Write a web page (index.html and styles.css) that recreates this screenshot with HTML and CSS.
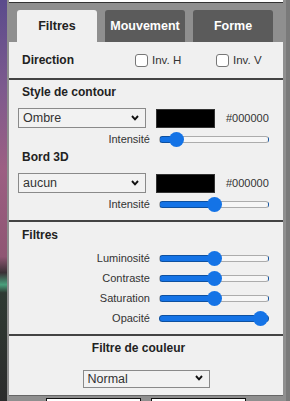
FILE: index.html
```html
<!DOCTYPE html>
<html lang="fr">
<head>
    <meta charset="UTF-8">
    <meta name="viewport" content="width=device-width, initial-scale=1.0">
    <title>Filtres</title>
    <link rel="stylesheet" href="styles.css">
</head>
<body>
    <div class="backdrop"></div>

    <div class="panel">
        <div class="top-strip"></div>

        <nav class="tabs">
            <button class="tab active">Filtres</button>
            <button class="tab">Mouvement</button>
            <button class="tab">Forme</button>
        </nav>

        <!-- Direction -->
        <section class="section direction">
            <h3>Direction</h3>
            <label class="check"><input type="checkbox"> Inv. H</label>
            <label class="check"><input type="checkbox"> Inv. V</label>
        </section>

        <!-- Contour + bord 3D -->
        <section class="section outline">
            <h3>Style de contour</h3>
            <div class="pick-row">
                <div class="select-wrap">
                    <select><option>Ombre</option></select>
                    <svg class="chevron" viewBox="0 0 8 6"><polyline points="1,1 4,4.3 7,1"/></svg>
                </div>
                <div class="swatch"></div>
                <span class="hex">#000000</span>
            </div>
            <div class="slider-row">
                <label>Intensité</label>
                <input type="range" value="10" style="--fill: 15.5%">
            </div>

            <h3 class="sub">Bord 3D</h3>
            <div class="pick-row">
                <div class="select-wrap">
                    <select><option>aucun</option></select>
                    <svg class="chevron" viewBox="0 0 8 6"><polyline points="1,1 4,4.3 7,1"/></svg>
                </div>
                <div class="swatch"></div>
                <span class="hex">#000000</span>
            </div>
            <div class="slider-row">
                <label>Intensité</label>
                <input type="range" value="50" style="--fill: 50%">
            </div>
        </section>

        <!-- Filtres -->
        <section class="section filters">
            <h3>Filtres</h3>
            <div class="slider-list">
                <div class="slider-row">
                    <label>Luminosité</label>
                    <input type="range" value="50" style="--fill: 50%">
                </div>
                <div class="slider-row">
                    <label>Contraste</label>
                    <input type="range" value="50" style="--fill: 50%">
                </div>
                <div class="slider-row">
                    <label>Saturation</label>
                    <input type="range" value="50" style="--fill: 50%">
                </div>
                <div class="slider-row">
                    <label>Opacité</label>
                    <input type="range" value="100" style="--fill: 100%">
                </div>
            </div>
        </section>

        <!-- Filtre de couleur -->
        <section class="section color-filter">
            <h3>Filtre de couleur</h3>
            <div class="select-wrap small">
                <select><option>Normal</option></select>
                <svg class="chevron" viewBox="0 0 8 6"><polyline points="1,1 4,4.3 7,1"/></svg>
            </div>
        </section>

        <div class="footer">
            <button class="foot-btn"></button>
            <button class="foot-btn"></button>
        </div>
    </div>
</body>
</html>
```

FILE: styles.css
```css
/* Panneau d'effets */
body {
    font-family: 'Liberation Sans', Arial, sans-serif;
    margin: 0;
    padding: 0;
    height: 401px;
    overflow: hidden;
    display: flex;
    color: #222;
}

.backdrop {
    width: 7px;
    flex-shrink: 0;
    background: linear-gradient(to bottom,
        #5a4b8c 0%, #7d5a8e 22%, #9c5f83 42%, #8f5673 64%,
        #3a3036 68%, #4aa07c 71%, #2f3a33 73%, #2c2c2c 100%);
}

.panel {
    flex: 1;
    min-width: 0;
    background-color: #8f8f8f;
    padding: 0 3px 0 2px;
    border-right: 4px solid #7a7a7a;
}

.top-strip {
    height: 2px;
    background-color: #fff;
    border-bottom: 1px solid #333;
}

.tabs {
    display: flex;
    gap: 8px;
    padding-left: 8px;
    margin-top: 7px;
}

.tab {
    width: 80px;
    height: 32px;
    border: none;
    border-radius: 3px 3px 0 0;
    background-color: #5b5b5b;
    color: #fff;
    font-family: inherit;
    font-size: 12.5px;
    font-weight: 700;
    padding: 0;
}

.tab.active {
    background-color: #f0f0f0;
    color: #222;
}

.section {
    background-color: #f0f0f0;
    border-top: 2px solid #444;
}

.section h3 {
    margin: 0;
    font-size: 12px;
    line-height: 14px;
    font-weight: 700;
}

/* Direction */
.direction {
    border-top: none;
    height: 36px;
    display: flex;
    align-items: center;
    padding: 0 13px;
}

.direction h3 {
    width: 113px;
}

.check {
    width: 81px;
    display: flex;
    align-items: center;
    gap: 4px;
    font-size: 11.5px;
    color: #333;
}

.check:last-child {
    width: auto;
}

.check input {
    -webkit-appearance: none;
    appearance: none;
    width: 13px;
    height: 13px;
    margin: 0;
    border: 1px solid #777;
    border-radius: 3px;
    background-color: #fff;
}

/* Contour */
.outline {
    padding: 5px 9px 8px;
}

.outline h3,
.filters h3 {
    padding-left: 4px;
}

.outline .sub {
    margin-top: 3px;
}

.pick-row {
    display: flex;
    align-items: center;
    margin-top: 9px;
}

.select-wrap {
    position: relative;
    width: 128px;
    height: 20px;
    flex-shrink: 0;
}

.select-wrap select {
    -webkit-appearance: none;
    appearance: none;
    width: 100%;
    height: 100%;
    margin: 0;
    padding: 0 0 0 4px;
    border: 1px solid #8a8a8a;
    border-radius: 0;
    background-color: #f2f2f2;
    font-family: inherit;
    font-size: 12.5px;
    color: #333;
}

.chevron {
    position: absolute;
    right: 7px;
    top: 7px;
    width: 8px;
    height: 6px;
    fill: none;
    stroke: #111;
    stroke-width: 1.9;
    pointer-events: none;
}

.swatch {
    width: 59px;
    height: 19px;
    margin-left: 10px;
    background-color: #000;
    box-sizing: border-box;
    border: 1px solid #333;
}

.hex {
    margin-left: 11px;
    font-size: 11px;
    color: #333;
}

/* Curseurs */
.slider-row {
    display: grid;
    grid-template-columns: 132px 110px;
    column-gap: 9px;
    align-items: center;
    height: 16px;
    margin-top: 3px;
}

.slider-row label {
    text-align: right;
    font-size: 11px;
    color: #333;
}

input[type="range"] {
    -webkit-appearance: none;
    appearance: none;
    width: 110px;
    height: 16px;
    margin: 0;
    background: transparent;
}

input[type="range"]::-webkit-slider-runnable-track {
    height: 7px;
    box-sizing: border-box;
    border: 1px solid rgba(0, 0, 0, 0.3);
    border-radius: 4px;
    background: linear-gradient(to right, #1473e6 var(--fill), #f6f6f6 var(--fill));
}

input[type="range"]::-webkit-slider-thumb {
    -webkit-appearance: none;
    width: 15px;
    height: 15px;
    margin-top: -5px;
    border-radius: 50%;
    background-color: #1473e6;
    border: none;
}

/* Filtres */
.filters {
    padding: 6px 9px 8px;
}

.slider-list {
    display: flex;
    flex-direction: column;
    gap: 4px;
    margin-top: 8px;
}

.slider-list .slider-row {
    margin-top: 0;
}

/* Filtre de couleur */
.color-filter {
    padding: 5px 9px 8px;
    display: flex;
    flex-direction: column;
    align-items: center;
    border-bottom: 1px solid #666;
}

.color-filter h3 {
    padding-right: 15px;
}

.select-wrap.small {
    width: 127px;
    height: 18px;
    margin-top: 14px;
}

.select-wrap.small .chevron {
    top: 6px;
}

.footer {
    display: flex;
    justify-content: center;
    gap: 10px;
    margin-top: 2px;
}

.foot-btn {
    width: 95px;
    height: 22px;
    background-color: #fff;
    border: 1px solid #111;
    padding: 0;
}
```
